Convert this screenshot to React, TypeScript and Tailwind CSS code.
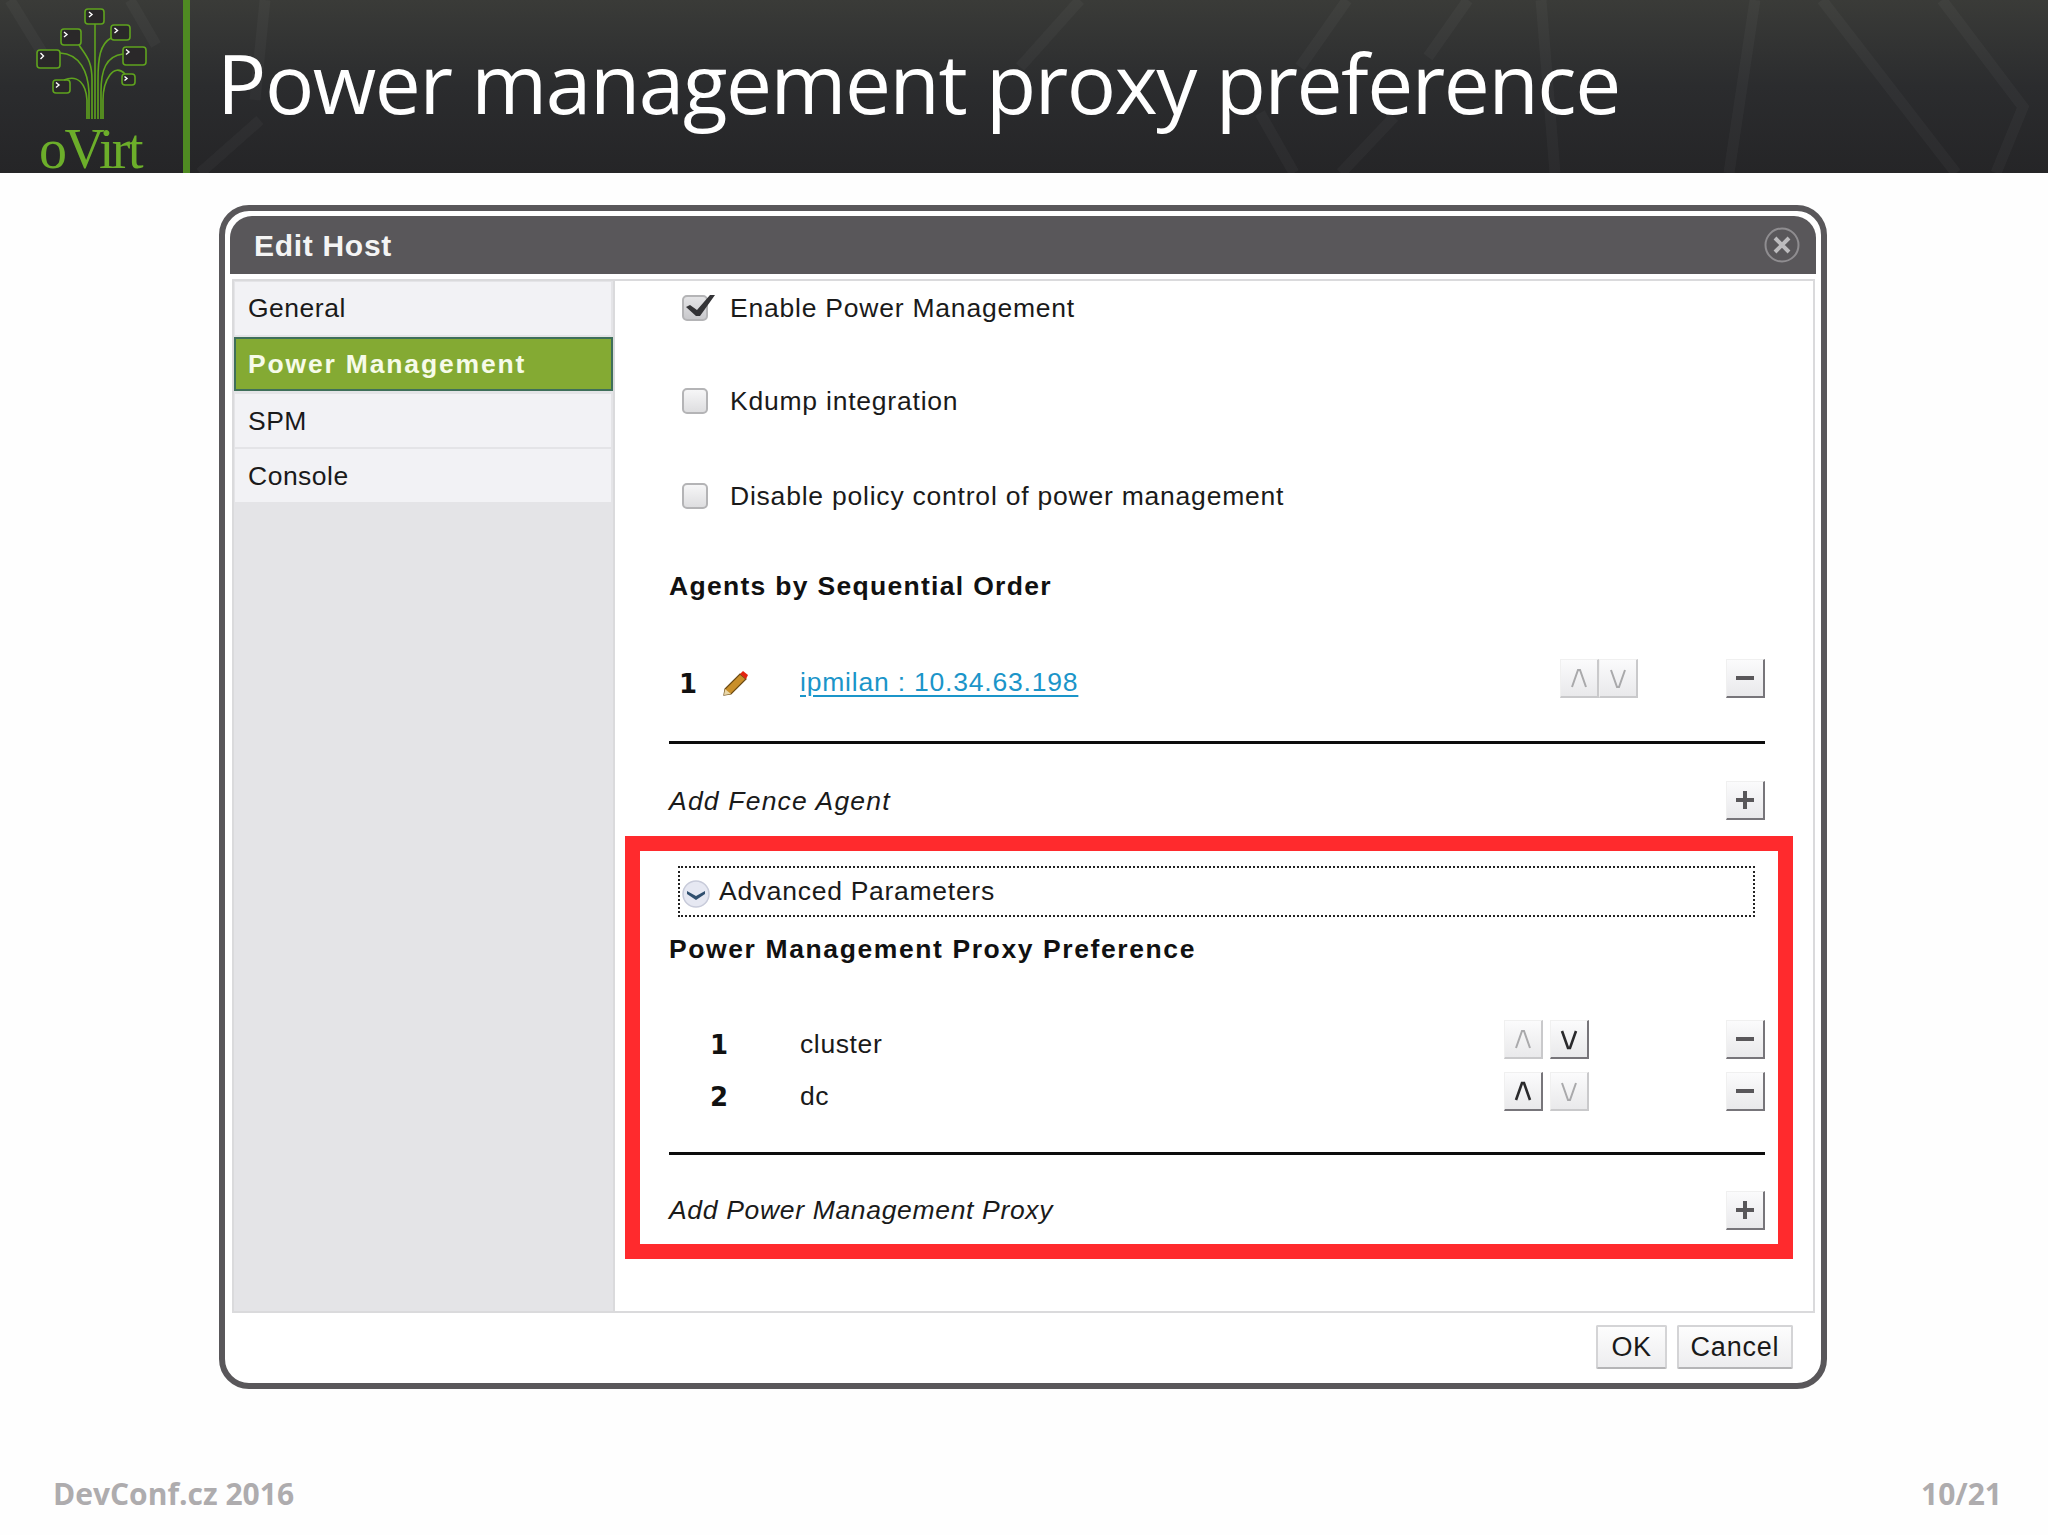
import type { ReactNode } from 'react';

const sans = "font-['Liberation_Sans',Arial,sans-serif]";

function HeaderLines() {
  // faint mesh behind the title bar
  return (
    <svg className="absolute inset-0 w-full h-full" viewBox="0 0 2048 173" preserveAspectRatio="none">
      <g stroke="#ffffff" strokeOpacity="0.03" strokeWidth="11" fill="none">
        <path d="M1080 0 L1020 67" />
        <path d="M1347 0 L1300 67" />
        <path d="M1260 113 L1294 173" />
        <path d="M1394 117 L1341 173" />
        <path d="M1468 0 L1428 57" />
        <path d="M1541 0 L1555 173" />
        <path d="M1755 0 L1729 173" />
        <path d="M1822 0 L1956 173" />
        <path d="M1942 0 L2023 107 L1996 173" />
        <path d="M10 0 L45 57" />
        <path d="M130 0 L156 45" />
        <path d="M265 0 L255 100" />
        <path d="M200 173 L260 120" />
      </g>
    </svg>
  );
}

function Logo() {
  const boxes = [
    [85, 9, 19, 15],
    [61, 29, 20, 16],
    [111, 25, 19, 15],
    [37, 50, 23, 18],
    [123, 47, 23, 18],
    [53, 80, 17, 13],
    [122, 74, 13, 11],
  ];
  return (
    <svg className="absolute left-0 top-0" width="183" height="125" viewBox="0 0 183 125" fill="none">
      <g stroke="#5fa31e" strokeWidth="1.6">
        {boxes.map(([x, y, w, h]) => (
          <rect key={`${x}-${y}`} x={x} y={y} width={w} height={h} rx="3" fill="#2a2829" />
        ))}
        <path d="M95 24 V119" />
        <path d="M92 119 V80 C92 60 86 56 79 45" />
        <path d="M98 119 V80 C98 58 100 44 111 38" />
        <path d="M89 119 V92 C88 72 80 54 60 53" />
        <path d="M101 119 V92 C101 70 106 56 123 54" />
        <path d="M87 119 V100 C86 84 78 74 64 80" />
        <path d="M103 119 V100 C103 80 114 62 125 74" />
      </g>
      <g stroke="#ffffff" strokeWidth="1.4">
        <path d="M89 12 L92 14.500 L89 17" />
        <path d="M64 32 L67 34.500 L64 37" />
        <path d="M114.500 28 L117.500 30.500 L114.500 33" />
        <path d="M40.500 53 L43.500 56 L40.500 59" />
        <path d="M126 49.500 L129 52 L126 54.500" />
        <path d="M56 82.500 L59 85 L56 87.500" />
        <path d="M124.500 76.500 L127 78.500 L124.500 80.500" />
      </g>
    </svg>
  );
}

function Chevron({ up, on }: { up?: boolean; on?: boolean }) {
  const d = up ? 'M2 19 L8 2 L10 2 L16 19' : 'M2 2 L8 19 L10 19 L16 2';
  return (
    <svg width="18" height="21" viewBox="0 0 18 21" fill="none">
      <path d={d} stroke={on ? '#2a2a2c' : '#a9a9ab'} strokeWidth={on ? 2.6 : 2} />
    </svg>
  );
}

function SquareButton({ children, active = true }: { children: ReactNode; active?: boolean }) {
  return (
    <div
      className={`w-[39px] h-[39px] flex items-center justify-center bg-gradient-to-b from-[#fbfbfc] to-[#e9e9eb] border-t border-l border-t-[#f0f0f0] border-l-[#f0f0f0] border-r-2 border-b-2 ${
        active ? 'border-r-[#77757a] border-b-[#77757a]' : 'border-r-[#c9c9cb] border-b-[#c9c9cb]'
      }`}
    >
      {children}
    </div>
  );
}

function Minus() {
  return (
    <SquareButton>
      <div className="w-[18px] h-[4px] bg-[#59575a]" />
    </SquareButton>
  );
}

function Plus() {
  return (
    <SquareButton>
      <svg width="18" height="18" viewBox="0 0 18 18">
        <path d="M7 0 H11 V7 H18 V11 H11 V18 H7 V11 H0 V7 H7 Z" fill="#59575a" />
      </svg>
    </SquareButton>
  );
}

function Checkbox({ checked }: { checked?: boolean }) {
  return (
    <div
      className={`relative w-[26px] h-[26px] shrink-0 rounded-[5px] border-2 border-[#b4b4b6] bg-gradient-to-b ${
        checked ? 'from-[#e4e4e6] to-[#c9c9cc]' : 'from-[#f6f6f7] to-[#dedee0]'
      }`}
    >
      {checked && (
        <svg className="absolute -top-[2px] -left-[2px]" width="34" height="24" viewBox="0 0 34 24">
          <path d="M4 12 L8 10 L15 15 L28 0 L33 0 L18 21 L14 21 Z" fill="#333336" />
        </svg>
      )}
    </div>
  );
}

function CheckRow({ label, checked, className }: { label: string; checked?: boolean; className: string }) {
  return (
    <div className={`flex items-center h-[54px] pl-[13px] gap-[22px] ${className}`}>
      <Checkbox checked={checked} />
      <span className="pt-[2px] text-[26.5px] tracking-[0.78px] text-[#1a1a1a] whitespace-nowrap">{label}</span>
    </div>
  );
}

function Pencil() {
  return (
    <svg className="mt-[8px]" width="26" height="26" viewBox="0 0 26 26">
      <path d="M2 19 L17 4 L23 9 L8 24 L1 25 Z" fill="#c98f2a" stroke="#6b4a14" strokeWidth="1.2" />
      <path d="M2 19 L1 25 L8 24 Z" fill="#e9d7a8" />
      <path d="M17 4 L20 1 L25 5 L23 9 Z" fill="#e4240f" />
    </svg>
  );
}

function PriorityRow({ n, label, upOn, downOn, className }: { n: string; label: string; upOn: boolean; downOn: boolean; className: string }) {
  return (
    <div className={`flex items-center h-[39px] ${className}`}>
      <span className="w-[131px] pl-[41px] pt-[11px] font-['DejaVu_Sans',sans-serif] font-bold text-[26px] text-[#111]">{n}</span>
      <span className="pt-[10px] text-[26.5px] tracking-[0.62px] text-[#1a1a1a]">{label}</span>
      <div className="ml-auto flex mr-[137px] gap-[7px]">
        <SquareButton active={upOn}>
          <Chevron up on={upOn} />
        </SquareButton>
        <SquareButton active={downOn}>
          <Chevron on={downOn} />
        </SquareButton>
      </div>
      <Minus />
    </div>
  );
}

function NavItem({ label, active, className }: { label: string; active?: boolean; className: string }) {
  if (active) {
    return (
      <div className={`flex items-center h-[54px] pl-[12px] pt-[2px] bg-[#84aa33] border-2 border-[#3f6f5a] font-bold text-[26.5px] tracking-[1.83px] text-[#f6fbe9] ${className}`}>
        {label}
      </div>
    );
  }
  return (
    <div className={`flex items-center h-[53px] pl-[13px] ml-[1px] mr-[2px] bg-[#f2f2f5] text-[26.5px] tracking-[0.5px] text-[#1a1a1a] ${className}`}>
      {label}
    </div>
  );
}

export default function App() {
  return (
    <div className={`w-[2048px] h-[1535px] bg-[#fefefe] flex flex-col overflow-hidden ${sans}`}>
      <header className="relative h-[173px] flex shrink-0 bg-gradient-to-b from-[#3a3b38] via-[#2b2c2e] to-[#252527]">
        <HeaderLines />
        <div className="relative w-[183px] shrink-0">
          <Logo />
          <span className="absolute left-[39px] top-[129px] font-['Liberation_Serif',serif] text-[56px] leading-[40px] tracking-[-2.6px] text-[#6cae2a]">
            oVirt
          </span>
        </div>
        <div className="relative w-[7px] shrink-0 bg-[#4f8a22]" />
        <h1 className="relative pl-[27px] pt-[26px] font-['Open_Sans',sans-serif] font-normal text-[82px] leading-[112px] tracking-[-1.45px] text-white whitespace-nowrap">
          Power management proxy preference
        </h1>
      </header>

      <main className="flex-1">
        <div className="ml-[219px] mt-[32px] w-[1608px] h-[1184px] border-[6px] border-[#59575a] rounded-[30px] p-[5px] bg-white flex flex-col">
          <div className="h-[58px] shrink-0 rounded-t-[22px] bg-[#59575a] flex items-center justify-between pl-[24px] pr-[16px]">
            <span className="font-bold text-[30px] tracking-[0.7px] text-[#f4f4f4]">Edit Host</span>
            <svg width="36" height="36" viewBox="0 0 36 36" fill="none">
              <circle cx="18" cy="18" r="16.500" stroke="#8f8d90" strokeWidth="2" />
              <path d="M11 11 L25 25 M25 11 L11 25" stroke="#bdbcbe" strokeWidth="4" />
            </svg>
          </div>

          <div className="ml-[2px] mr-[1px] mt-[5px] h-[1034px] shrink-0 border-2 border-[#dadadc] flex">
            <nav className="w-[381px] shrink-0 bg-[#e4e4e7] border-r-2 border-[#dadadc] pt-[1px]">
              <NavItem label="General" className="" />
              <NavItem label="Power Management" active className="mt-[2px]" />
              <NavItem label="SPM" className="mt-[3px] pt-[2px]" />
              <NavItem label="Console" className="mt-[2px] pt-[2px]" />
            </nav>

            <section className="flex-1 min-w-0 flex flex-col pl-[54px] pr-[48px]">
              <CheckRow label="Enable Power Management" checked className="" />
              <CheckRow label="Kdump integration" className="mt-[39px]" />
              <CheckRow label="Disable policy control of power management" className="mt-[41px]" />

              <h2 className="mt-[44px] h-[40px] flex items-center font-bold text-[26.5px] tracking-[1.3px] text-[#111]">
                Agents by Sequential Order
              </h2>

              <div className="mt-[52px] h-[39px] flex items-center">
                <span className="w-[54px] pl-[10px] pt-[11px] font-['DejaVu_Sans',sans-serif] font-bold text-[26px] text-[#111]">1</span>
                <Pencil />
                <a className="ml-[51px] pt-[9px] text-[26.5px] tracking-[0.8px] text-[#1b95c9] underline underline-offset-[4px]">
                  ipmilan : 10.34.63.198
                </a>
                <div className="ml-auto mr-[88px] flex">
                  <SquareButton active={false}>
                    <Chevron up />
                  </SquareButton>
                  <SquareButton active={false}>
                    <Chevron />
                  </SquareButton>
                </div>
                <Minus />
              </div>

              <div className="mt-[43px] h-[3px] bg-[#0c0c0c]" />

              <div className="mt-[37px] h-[39px] flex items-center justify-between">
                <span className="pt-[2px] italic text-[26.5px] tracking-[1.2px] text-[#1a1a1a]">Add Fence Agent</span>
                <Plus />
              </div>

              <div className="mt-[16px] -ml-[44px] w-[1168px] border-[15px] border-[#ff2a2d] pl-[29px] pr-[13px] pt-[15px] pb-[14px] flex flex-col">
                <div className="ml-[9px] mr-[10px] h-[51px] border-2 border-dotted border-[#222] flex items-center pl-[2px] gap-[9px]">
                  <svg className="mt-[5px]" width="28" height="28" viewBox="0 0 28 28">
                    <circle cx="14" cy="14" r="13" fill="#e6e8f2" stroke="#c8cbda" strokeWidth="1.500" />
                    <path d="M5 11 L14 16 L23 11 L23 14 L14 20 L5 14 Z" fill="#31506f" />
                  </svg>
                  <span className="text-[26.5px] tracking-[0.72px] text-[#1a1a1a]">Advanced Parameters</span>
                </div>
                <h2 className="mt-[17px] h-[32px] flex items-center font-bold text-[26.5px] tracking-[1.6px] text-[#111]">
                  Power Management Proxy Preference
                </h2>
                <PriorityRow n="1" label="cluster" upOn={false} downOn className="mt-[54px]" />
                <PriorityRow n="2" label="dc" upOn downOn={false} className="mt-[13px]" />
                <div className="mt-[41px] h-[3px] bg-[#0c0c0c]" />
                <div className="mt-[36px] h-[39px] flex items-center justify-between">
                  <span className="italic text-[26.5px] tracking-[0.67px] text-[#1a1a1a]">Add Power Management Proxy</span>
                  <Plus />
                </div>
              </div>
            </section>
          </div>

          <div className="flex-1 flex items-center justify-end gap-[10px] pr-[23px] pt-[3px]">
            <button className="w-[71px] h-[44px] border-2 border-[#d4d4d6] border-b-[#b5b5b7] rounded-[2px] bg-gradient-to-b from-[#fdfdfd] to-[#ededef] text-[27px] tracking-[0.5px] text-[#1a1a1a]">
              OK
            </button>
            <button className="w-[116px] h-[44px] border-2 border-[#d4d4d6] border-b-[#b5b5b7] rounded-[2px] bg-gradient-to-b from-[#fdfdfd] to-[#ededef] text-[27px] tracking-[0.8px] text-[#1a1a1a]">
              Cancel
            </button>
          </div>
        </div>
      </main>

      <footer className="h-[76px] shrink-0 flex justify-between items-start pl-[53px] pr-[46px] pt-[15px] font-['Open_Sans',sans-serif] font-bold text-[30px] leading-[40px] text-[#aeacae]">
        <span>DevConf.cz 2016</span>
        <span>10/21</span>
      </footer>
    </div>
  );
}
